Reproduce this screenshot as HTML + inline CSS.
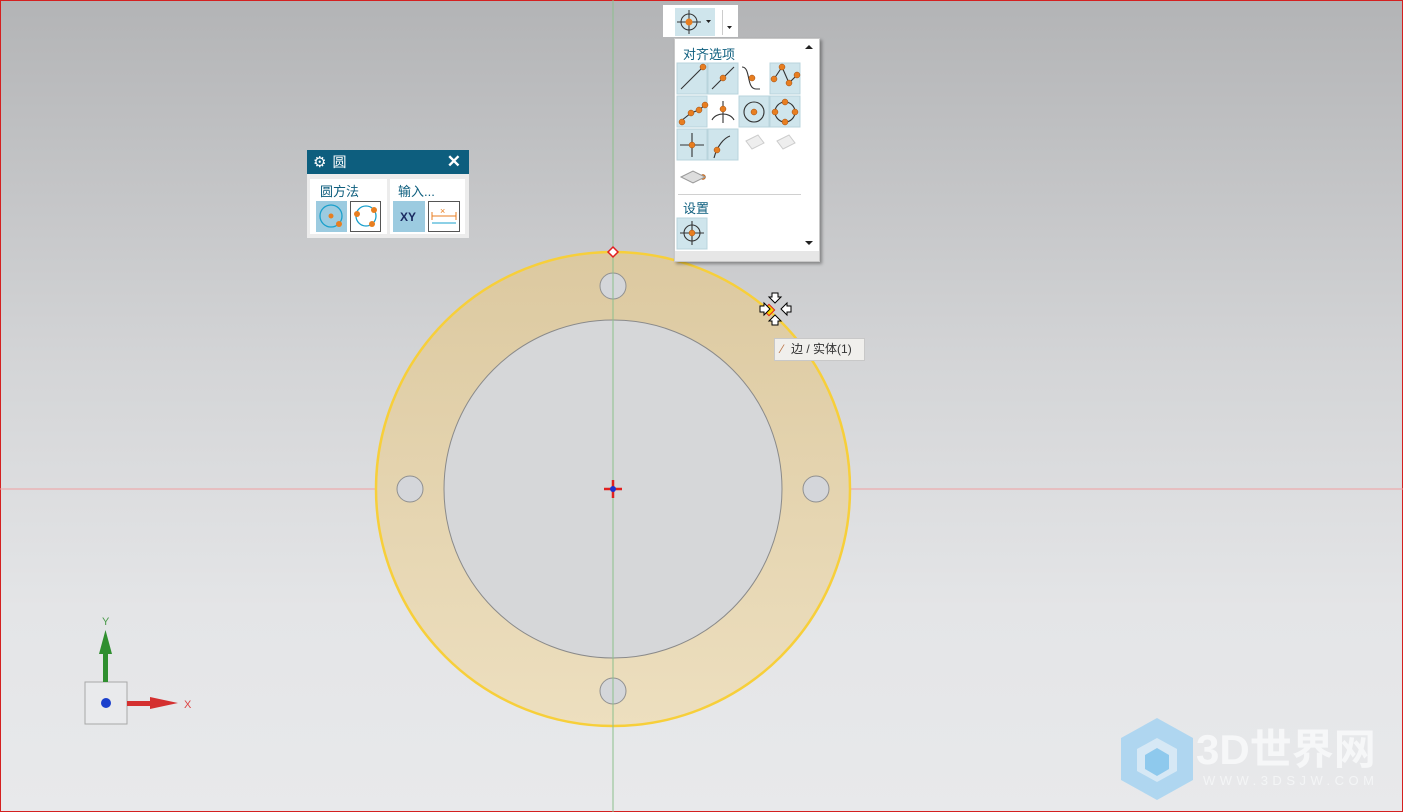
<!DOCTYPE html>
<html><head><meta charset="utf-8"><style>
body{margin:0;width:1403px;height:812px;overflow:hidden;font-family:"Liberation Sans","Noto Sans CJK SC",sans-serif;}
#bg{position:absolute;left:0;top:0;width:1401px;height:810px;border:1px solid #d42020;background:linear-gradient(#b3b4b6,#d4d5d7 45%,#e4e5e7 75%,#e8e9eb);}
.abs{position:absolute}
</style></head><body>
<div id="bg"></div>
<svg class="abs" style="left:0;top:0" width="1403" height="812">
<defs><linearGradient id="g" x1="0" y1="0" x2="0" y2="1"><stop offset="0" stop-color="#dcc9a0"/><stop offset="1" stop-color="#eddfbf"/></linearGradient></defs>
<line x1="0" y1="489" x2="1403" y2="489" stroke="#f0a0a0" stroke-width="1"/>
<path fill-rule="evenodd" fill="url(#g)" d="M613 252a237 237 0 1 0 0.01 0Z M613 320a169 169 0 1 1 -0.01 0Z"/>
<circle cx="613" cy="489" r="237" fill="none" stroke="#f7cf3a" stroke-width="2.5"/>
<circle cx="613" cy="489" r="169" fill="#d6d7d9" stroke="#8a8a8a" stroke-width="1"/>
<g fill="#d4d6da" stroke="#909090"><circle cx="613" cy="286" r="13"/><circle cx="410" cy="489" r="13"/><circle cx="816" cy="489" r="13"/><circle cx="613" cy="691" r="13"/></g>
<line x1="613" y1="0" x2="613" y2="812" stroke="#8cc08c" stroke-width="1"/>
<path d="M613 247l5 5-5 5-5-5z" fill="#fff" stroke="#e02020" stroke-width="1.5"/>
<path d="M604 489h18M613 480v18" stroke="#e02020" stroke-width="2.5"/><circle cx="613" cy="489" r="3" fill="#2030d0"/>
<rect x="765" y="306" width="8" height="8" fill="#f6d000" stroke="#e02020" transform="rotate(45 769 310)"/>
<g fill="#fff" stroke="#000" stroke-width="1"><path d="M772 293h6v4h3l-6 6-6-6h3z"/><path d="M772 325h6v-4h3l-6-6-6 6h3z"/><path d="M760 306v6h4v3l6-6-6-6v3z"/><path d="M791 306v6h-4v3l-6-6 6-6v3z"/></g>
<rect x="85" y="682" width="42" height="42" fill="#e9eaec" stroke="#a8a8a8"/>
<circle cx="106" cy="703" r="5" fill="#1a3fcc"/>
<rect x="103" y="645" width="5" height="37" fill="#2f8f2f"/><path d="M99 654l6.5-24 6.5 24z" fill="#2f8f2f"/>
<rect x="127" y="701" width="30" height="5" fill="#d43030"/><path d="M150 697l28 6-28 6z" fill="#d43030"/>
<text x="102" y="625" font-size="11" fill="#4a9a4a" font-family="Liberation Sans">Y</text>
<text x="184" y="708" font-size="11" fill="#d44" font-family="Liberation Sans">X</text>
<g opacity="0.85"><path d="M1157 718l36 20v42l-36 20-36-20v-42z" fill="#a6d4f2"/><path d="M1157 738l20 11v22l-20 11-20-11v-22z" fill="#e8f2fa" opacity=".7"/><path d="M1157 748l12 7v14l-12 7-12-7v-14z" fill="#7fc4ee"/></g>
<text x="1196" y="764" font-size="42" font-weight="bold" fill="#f6f7f8" font-family="Liberation Sans, Noto Sans CJK SC, sans-serif">3D世界网</text>
<text x="1203" y="785" font-size="13" fill="#f4f5f6" letter-spacing="4.5" font-family="Liberation Sans">WWW.3DSJW.COM</text>
</svg>
<div class="abs" style="left:774px;top:338px;width:89px;height:21px;background:#f0efec;border:1px solid #c8c8c8;font-size:12px;line-height:21px;color:#333"><span style="color:#b97040;margin-left:6px">⁄</span><span style="margin-left:8px">边 / 实体(1)</span></div>
<div class="abs" style="left:307px;top:150px;width:162px;height:88px;background:#ececec;">
 <div style="height:24px;background:#0d5e7e;color:#fff;font-size:14px;line-height:24px;position:relative"><span style="margin-left:6px;font-size:15px">⚙</span><span style="margin-left:6px">圆</span><span style="position:absolute;right:8px;top:0;font-size:17px;font-weight:bold">✕</span></div>
 <div class="abs" style="left:3px;top:29px;width:77px;height:55px;background:#fff"></div>
 <div class="abs" style="left:83px;top:29px;width:75px;height:55px;background:#fff"></div>
 <div class="abs" style="left:13px;top:31px;font-size:13px;color:#0d5e7e">圆方法</div>
 <div class="abs" style="left:91px;top:31px;font-size:13px;color:#0d5e7e">输入...</div>
 <svg class="abs" style="left:9px;top:51px" width="155" height="32">
  <rect x="0" y="0" width="31" height="31" fill="#9ccbe0"/><circle cx="15" cy="15" r="11" fill="none" stroke="#1aa0cc" stroke-width="1.3"/><circle cx="15" cy="15" r="2.5" fill="#e87e20"/><circle cx="23" cy="23" r="3" fill="#e87e20"/>
  <rect x="34.5" y="0.5" width="30" height="30" fill="#fff" stroke="#555"/><circle cx="50" cy="15" r="10" fill="none" stroke="#1aa0cc" stroke-width="1.3"/><circle cx="41" cy="13" r="3" fill="#e87e20"/><circle cx="58" cy="9" r="3" fill="#e87e20"/><circle cx="56" cy="23" r="3" fill="#e87e20"/>
  <rect x="77" y="0" width="32" height="31" fill="#9ccbe0"/><text x="84" y="20" font-size="12" font-weight="bold" fill="#1a2a60" font-family="Liberation Sans">XY</text>
  <rect x="112.5" y="0.5" width="31" height="30" fill="#fff" stroke="#555"/><path d="M116 15h24M116 11v8M140 11v8" stroke="#e87e20"/><path d="M116 22h24" stroke="#1aa0cc"/><text x="124" y="13" font-size="9" fill="#e87e20">×</text>
 </svg>
</div>
<div class="abs" style="left:663px;top:5px;width:75px;height:32px;background:#fff"></div>
<div class="abs" style="left:675px;top:8px;width:40px;height:28px;background:#cfe5ec"></div>
<div class="abs" style="left:722px;top:10px;width:1px;height:25px;background:#ccc"></div>
<svg class="abs" style="left:663px;top:5px" width="75" height="32">
 <g stroke="#333" fill="none"><circle cx="26" cy="17" r="8"/><path d="M26 5v24M14 17h24"/></g><circle cx="26" cy="17" r="3.5" fill="#e87e20"/>
 <path d="M43 15h5l-2.5 3z M64 21h5l-2.5 3z" fill="#222"/>
</svg>
<div class="abs" style="left:674px;top:38px;width:144px;height:222px;background:#fff;border:1px solid #c8c8c8;box-shadow:2px 2px 3px rgba(0,0,0,.35)">
 <div class="abs" style="left:8px;top:5px;font-size:13px;color:#0d5e7e">对齐选项</div>
 <div class="abs" style="left:8px;top:159px;font-size:13px;color:#0d5e7e">设置</div>
 <div class="abs" style="left:3px;top:155px;width:123px;height:1px;background:#d0d0d0"></div>
 <div class="abs" style="left:0;top:212px;width:144px;height:10px;background:#e6e6e6"></div>
 <svg class="abs" style="left:0;top:0" width="144" height="224">
  <g fill="#cfe5ec" stroke="#b8d4dc"><rect x="2" y="24" width="30" height="31"/><rect x="33" y="24" width="30" height="31"/><rect x="95" y="24" width="30" height="31"/><rect x="2" y="57" width="30" height="31"/><rect x="64" y="57" width="30" height="31"/><rect x="95" y="57" width="30" height="31"/><rect x="2" y="90" width="30" height="31"/><rect x="33" y="90" width="30" height="31"/><rect x="2" y="179" width="30" height="31"/></g>
  <g stroke="#333" fill="none" stroke-width="1.1">
   <path d="M6 50L28 28"/><path d="M37 50L59 28"/><path d="M67 28c9 0 4 22 14 22h4"/><path d="M99 40l8-12 7 16 8-8"/>
   <path d="M6 82l10-8 8-3 6-5"/><path d="M37 81c4-8 18-8 22 0M48 62v22"/><circle cx="79" cy="73" r="10"/><circle cx="110" cy="73" r="10"/>
   <path d="M5 106h24M17 94v24"/><path d="M39 119c3-12 10-20 16-22"/>
   <circle cx="17" cy="194" r="8"/><path d="M17 182v24M5 194h24"/>
  </g>
  <g fill="#e87e20" stroke="#9a4a10" stroke-width=".5">
   <circle cx="28" cy="28" r="3"/><circle cx="48" cy="39" r="3"/><circle cx="77" cy="39" r="3"/><circle cx="99" cy="40" r="3"/><circle cx="107" cy="28" r="3"/><circle cx="114" cy="44" r="3"/><circle cx="122" cy="36" r="3"/>
   <circle cx="7" cy="83" r="3"/><circle cx="16" cy="74" r="3"/><circle cx="24" cy="71" r="3"/><circle cx="30" cy="66" r="3"/><circle cx="48" cy="70" r="3"/><circle cx="79" cy="73" r="3"/><circle cx="110" cy="63" r="3"/><circle cx="100" cy="73" r="3"/><circle cx="120" cy="73" r="3"/><circle cx="110" cy="83" r="3"/>
   <circle cx="17" cy="106" r="3"/><circle cx="42" cy="111" r="3"/><circle cx="17" cy="194" r="3"/><circle cx="28" cy="138" r="2.5"/>
  </g>
  <path d="M71 102l12-6 6 8-12 6z M102 102l12-6 6 8-12 6z" fill="#eee" stroke="#ccc"/>
  <path d="M6 138l12-6 12 6-12 6z" fill="#ddd" stroke="#999"/>
  <path d="M130 10l4-4 4 4z M130 202l4 4 4-4z" fill="#222"/>
 </svg>
</div>
</body></html>
